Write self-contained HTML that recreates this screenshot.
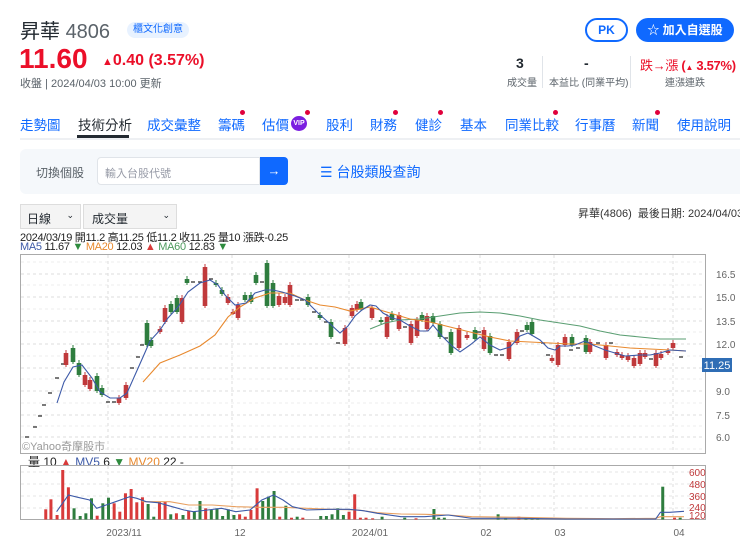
<!DOCTYPE html>
<html><head><meta charset="utf-8">
<style>
*{margin:0;padding:0;box-sizing:border-box}
body{width:740px;height:559px;overflow:hidden;background:#fff;font-family:"Liberation Sans","Noto Sans CJK TC",sans-serif;color:#232a31;position:relative}
.a{position:absolute;white-space:nowrap}
.nav span{position:absolute;top:114px;font-size:13.5px;color:#0f69ff}
.dot{position:absolute;width:5px;height:5px;border-radius:50%;background:#e0003c}
</style></head><body>
<div class="a" style="left:20px;top:15px;font-size:20px;color:#232a31">昇華 <span style="color:#5b636a">4806</span></div>
<div class="a" style="left:127px;top:22px;width:62px;height:16px;border-radius:8px;background:#e8f2ff;color:#0f69ff;font-size:10px;text-align:center;line-height:16px">櫃文化創意</div>
<div class="a" style="left:19px;top:43px;font-size:28px;font-weight:bold;color:#eb0f29">11.60</div>
<div class="a" style="left:102px;top:52px;font-size:16px;font-weight:bold;color:#eb0f29"><span style="font-size:11px">▲</span>0.40 (3.57%)</div>
<div class="a" style="left:20px;top:75px;font-size:11px;color:#5b636a">收盤 | 2024/04/03 10:00 更新</div>
<div class="a" style="left:585px;top:18px;width:43px;height:24px;border:2px solid #0f69ff;border-radius:12px;color:#0f69ff;font-size:12px;font-weight:bold;text-align:center;line-height:20px">PK</div>
<div class="a" style="left:636px;top:18px;width:98px;height:24px;background:#0f69ff;border-radius:12px;color:#fff;font-size:12px;font-weight:bold;text-align:center;line-height:24px">☆ 加入自選股</div>
<div class="a" style="left:516px;top:55px;font-size:14px;font-weight:bold">3</div>
<div class="a" style="left:507px;top:74px;font-size:10px;color:#5b636a">成交量</div>
<div class="a" style="left:542px;top:56px;width:1px;height:32px;background:#e0e4e9"></div>
<div class="a" style="left:584px;top:55px;font-size:14px;font-weight:bold">-</div>
<div class="a" style="left:549px;top:74px;font-size:10px;color:#5b636a">本益比 (同業平均)</div>
<div class="a" style="left:630px;top:56px;width:1px;height:32px;background:#e0e4e9"></div>
<div class="a" style="left:640px;top:55px;font-size:13px;color:#eb0f29;letter-spacing:-0.3px">跌→漲 <b>(<span style="font-size:8px">▲</span> 3.57%)</b></div>
<div class="a" style="left:665px;top:74px;font-size:10px;color:#5b636a">連漲連跌</div>
<div class="nav">
<span style="left:20px">走勢圖</span><span style="left:78px;color:#232a31">技術分析</span><span style="left:147px">成交彙整</span><span style="left:218px">籌碼</span><span style="left:262px">估價</span><span style="left:326px">股利</span><span style="left:370px">財務</span><span style="left:415px">健診</span><span style="left:460px">基本</span><span style="left:505px">同業比較</span><span style="left:575px">行事曆</span><span style="left:632px">新聞</span><span style="left:677px">使用說明</span>
</div>
<div class="a" style="left:291px;top:116px;width:16px;height:15px;border-radius:50%;background:#7b1fe0;color:#fff;font-size:7px;font-weight:bold;text-align:center;line-height:15px">VIP</div>
<div class="dot" style="left:240px;top:110px"></div><div class="dot" style="left:305px;top:110px"></div><div class="dot" style="left:393px;top:110px"></div><div class="dot" style="left:438px;top:110px"></div><div class="dot" style="left:553px;top:110px"></div><div class="dot" style="left:655px;top:110px"></div>
<div class="a" style="left:77px;top:135px;width:52px;height:3px;background:#232a31"></div>
<div class="a" style="left:20px;top:138px;width:720px;height:2px;background:#eef0f3"></div>
<div class="a" style="left:20px;top:149px;width:725px;height:45px;background:#f5f8fb;border-radius:6px"></div>
<div class="a" style="left:36px;top:164px;font-size:12px;color:#5b636a">切換個股</div>
<div class="a" style="left:97px;top:157px;width:163px;height:28px;background:#fff;border:1px solid #e0e4e9;border-radius:4px 0 0 4px;font-size:11px;color:#979ba7;padding:7px 7px">輸入台股代號</div>
<div class="a" style="left:260px;top:157px;width:28px;height:28px;background:#0f69ff;border-radius:0 4px 4px 0;color:#fff;font-size:13px;text-align:center;line-height:28px">→</div>
<div class="a" style="left:320px;top:162px;font-size:14px;color:#0f69ff">☰ 台股類股查詢</div>
<div class="a" style="left:20px;top:204px;width:61px;height:25px;background:#f4f4f4;border:1px solid #ddd;font-size:12px;padding:5px 6px">日線<span style="position:absolute;right:6px;font-size:9px">⌄</span></div>
<div class="a" style="left:83px;top:204px;width:94px;height:25px;background:#f4f4f4;border:1px solid #ddd;font-size:12px;padding:5px 8px">成交量<span style="position:absolute;right:6px;font-size:9px">⌄</span></div>
<div class="a" style="left:578px;top:205px;font-size:11px;color:#333">昇華(4806)&nbsp;&nbsp;最後日期: 2024/04/03</div>
<div class="a" style="left:20px;top:229px;font-size:11px;color:#222;letter-spacing:-0.3px">2024/03/19 開11.2 高11.25 低11.2 收11.25 量10 漲跌-0.25</div>
<div class="a" style="left:20px;top:241px;font-size:11px;color:#222;letter-spacing:-0.3px"><span style="color:#3d5aa8">MA5</span> 11.67 <span style="color:#2e8b3e">▼</span> <span style="color:#e8892e">MA20</span> 12.03 <span style="color:#d83a3a">▲</span> <span style="color:#4d9a5d">MA60</span> 12.83 <span style="color:#2e8b3e">▼</span></div>
<div class="a" style="left:28px;top:453px;font-size:12px;color:#222"><span>量</span> 10 <span style="color:#d83a3a">▲</span> <span style="color:#3d5aa8">MV5</span> 6 <span style="color:#2e8b3e">▼</span> <span style="color:#e8892e">MV20</span> 22 -</div>
<svg id="s" class="a" style="left:0;top:0" width="740" height="559"></svg>
<script>
var s='';
function L(x1,y1,x2,y2,c,d,w){s+='<line x1="'+x1+'" y1="'+y1+'" x2="'+x2+'" y2="'+y2+'" stroke="'+c+'" stroke-width="'+(w||1)+'"'+(d?' stroke-dasharray="3,3"':'')+'/>';}
function T(x,y,t,c,sz,a){s+='<text x="'+x+'" y="'+y+'" fill="'+c+'" font-size="'+sz+'" font-family="Liberation Sans,Noto Sans CJK TC,sans-serif"'+(a?' text-anchor="'+a+'"':'')+'>'+t+'</text>';}
var gx=[108,232,349,480,554,673];
[274,297,321,344,368,391,415,437].forEach(function(y){L(21,y,705,y,'#ddd',1);});
[262,285,309,332,356,379,403,426,449].forEach(function(y){L(21,y,705,y,'#eee',1);});
gx.forEach(function(x){L(x,255,x,452,'#ddd',1);L(x,466,x,519,'#ddd',1);});
s+='<rect x="20.5" y="254.5" width="685" height="199" fill="none" stroke="#aaa"/>';
s+='<rect x="20.5" y="465.5" width="685" height="54" fill="none" stroke="#aaa"/>';
[[274,'16.5'],[297,'15.0'],[321,'13.5'],[344,'12.0'],[391,'9.0'],[415,'7.5'],[437,'6.0']].forEach(function(p){T(716,p[0]+4,p[1],'#666',10);});
s+='<rect x="702" y="358" width="30" height="14" fill="#2f6db5"/>';T(717,369,'11.25','#fff',11,'middle');
T(22,450,'©Yahoo奇摩股市','#999',11);
var C=[[27,437,437,'k'],[35,427,427,'k'],[40,416,416,'k'],[44,405,405,'k'],[50,393,393,'k'],[57,378,378,'k'],[63,364,364,'k'],[66,353,365,'r'],[73,348,362,'g'],[79,363,375,'g'],[85,375,385,'r'],[90,380,389,'r'],[97,376,391,'g'],[102,388,395,'g'],[108,402,402,'k'],[114,402,402,'k'],[119,398,403,'r'],[126,385,398,'r'],[132,368,368,'k'],[138,357,357,'k'],[142,345,345,'k'],[147,323,345,'g'],[151,340,346,'g'],[160,329,332,'r'],[165,308,322,'r'],[171,304,312,'g'],[177,298,312,'g'],[182,298,322,'r'],[187,279,283,'g'],[193,282,282,'k'],[200,282,284,'k'],[205,267,306,'r'],[211,279,281,'k'],[216,283,285,'g'],[222,290,294,'g'],[228,297,303,'r'],[233,312,313,'r'],[238,305,318,'r'],[245,295,300,'g'],[251,295,302,'g'],[256,275,283,'g'],[262,282,283,'k'],[267,263,306,'g'],[273,283,306,'g'],[279,296,305,'r'],[285,297,303,'r'],[290,285,305,'r'],[297,300,301,'k'],[302,300,302,'k'],[308,297,305,'g'],[314,312,313,'k'],[320,315,318,'g'],[326,322,323,'k'],[331,322,337,'g'],[338,343,344,'k'],[345,328,344,'r'],[352,308,316,'r'],[357,304,310,'r'],[361,302,309,'g'],[372,308,318,'r'],[381,320,322,'g'],[387,317,337,'r'],[392,314,320,'g'],[399,315,329,'r'],[405,327,328,'k'],[411,324,343,'r'],[417,320,336,'r'],[422,315,320,'g'],[427,316,329,'r'],[433,316,323,'g'],[440,324,337,'g'],[446,338,339,'k'],[451,332,353,'g'],[459,328,348,'r'],[467,335,338,'r'],[475,330,339,'g'],[479,332,333,'k'],[484,330,349,'r'],[490,336,353,'g'],[496,355,356,'k'],[502,355,356,'k'],[509,342,359,'r'],[517,332,343,'r'],[522,331,333,'k'],[527,325,330,'g'],[532,322,334,'g'],[543,343,344,'k'],[548,355,356,'k'],[552,358,361,'r'],[558,345,365,'r'],[565,337,345,'r'],[571,350,351,'k'],[572,337,345,'g'],[578,348,351,'k'],[586,338,352,'g'],[590,342,352,'r'],[598,343,344,'k'],[606,345,358,'r'],[611,343,344,'k'],[617,352,355,'r'],[622,355,358,'r'],[628,356,360,'r'],[634,358,366,'r'],[640,353,364,'r'],[645,353,357,'r'],[651,359,360,'k'],[656,353,366,'r'],[661,354,358,'r'],[668,351,353,'r'],[673,343,348,'r'],[681,357,358,'k']];
C.forEach(function(c){var col=c[3]=='r'?'#c0393b':c[3]=='g'?'#2e7d3e':'#333';if(c[3]=='k'){L(c[0]-2,c[1],c[0]+2,c[1],'#333',0,1.3);}else{L(c[0],c[1]-3,c[0],c[2]+2,col,0,1);s+='<rect x="'+(c[0]-2.3)+'" y="'+c[1]+'" width="4.6" height="'+Math.max(2,c[2]-c[1])+'" fill="'+col+'"/>';}});
function P(pts,c,f){var d=pts.map(function(p){return f?(p[0]/2.12).toFixed(1)+','+(450+p[1]/3).toFixed(1):p[0]+','+p[1];}).join(' ');s+='<polyline points="'+d+'" fill="none" stroke="'+c+'" stroke-width="1.1"/>';}
P([[370,329],[385,323],[400,320],[420,319],[440,316],[460,313],[480,312],[500,313],[520,316],[540,320],[560,323],[580,326],[600,331],[620,335],[640,337],[660,339],[686,339]],'#5a9e72');
P([[143,382],[160,363],[180,355],[200,346],[215,335],[228,317],[240,307],[255,298],[270,293],[290,293],[305,300],[320,305],[335,307],[350,311],[370,307],[390,313],[410,319],[430,322],[450,327],[470,332],[490,337],[510,341],[530,342],[550,343],[570,344],[590,344],[610,346],[630,348],[650,349],[670,350],[686,351]],'#e8892e');
P([[57,403],[64,382],[73,367],[82,365],[92,378],[100,392],[110,398],[120,398],[127,393],[135,375],[143,357],[150,341],[160,330],[168,318],[178,307],[188,292],[200,283],[210,280],[218,285],[225,295],[235,305],[246,303],[255,293],[265,290],[273,290],[282,292],[295,296],[305,300],[318,313],[328,322],[340,333],[348,326],[355,316],[362,310],[370,305],[376,306],[383,313],[392,318],[400,320],[410,326],[420,331],[428,331],[433,325],[442,336],[452,346],[460,352],[470,345],[480,337],[490,345],[500,350],[510,347],[520,336],[528,333],[540,340],[548,348],[555,350],[560,346],[568,346],[575,345],[585,341],[595,346],[605,350],[615,353],[625,356],[640,355],[650,355],[660,353],[670,350],[686,351]],'#3d5aa8');
[472,484,496,508].forEach(function(y){L(21,y,705,y,'#e4e4e4',1);});
[['600',476],['480',488],['360',500],['240',511],['120',519]].forEach(function(p){T(689,p[1],p[0],'#c0393b',10);});
var V=[[97,178,'r'],[108,148,'r'],[121,195,'r'],[133,60,'r'],[145,112,'r'],[157,175,'g'],[170,198,'g'],[182,190,'g'],[194,145,'g'],[206,197,'r'],[218,160,'g'],[230,143,'g'],[242,160,'r'],[254,185,'r'],[266,130,'r'],[278,117,'r'],[290,157,'r'],[302,142,'r'],[314,162,'g'],[326,200,'g'],[338,155,'r'],[350,155,'r'],[362,193,'g'],[374,190,'r'],[388,195,'g'],[400,182,'r'],[412,185,'g'],[424,153,'g'],[436,175,'r'],[448,180,'g'],[460,175,'g'],[472,198,'g'],[484,178,'g'],[496,195,'g'],[508,193,'r'],[520,200,'r'],[532,180,'r'],[545,115,'r'],[557,153,'g'],[569,140,'g'],[581,123,'g'],[593,200,'r'],[606,167,'g'],[618,203,'r'],[630,200,'g'],[642,203,'r'],[680,198,'g'],[692,198,'g'],[704,193,'g'],[716,175,'g'],[728,195,'g'],[740,185,'r'],[752,133,'r'],[764,203,'r'],[776,203,'r'],[790,205,'r'],[810,200,'g'],[858,203,'g'],[882,205,'r'],[920,177,'g'],[930,203,'g'],[942,203,'g'],[1056,193,'g'],[1072,205,'g'],[1100,200,'r'],[1115,203,'g'],[1128,203,'g'],[1140,203,'g'],[1200,205,'g'],[1220,205,'g'],[1245,205,'g'],[1405,110,'g'],[1430,203,'r'],[1442,203,'g']];
V.forEach(function(v){var x=v[0]/2.12,y=450+v[1]/3;s+='<rect x="'+(x-1.5)+'" y="'+y.toFixed(1)+'" width="3" height="'+Math.max(1,519.5-y).toFixed(1)+'" fill="'+(v[2]=='r'?'#d83a3a':'#2e7d3e')+'"/>';});
P([[300,155],[360,155],[400,165],[450,165],[500,170],[550,172],[600,172],[650,175],[700,178],[760,180],[800,188],[850,192],[900,193],[950,195],[1000,200],[1100,202],[1200,205],[1300,206],[1390,205],[1400,200],[1450,200]],'#e8a060',1);
P([[120,185],[145,135],[165,142],[190,150],[205,175],[225,165],[245,155],[275,140],[290,145],[310,155],[335,158],[365,170],[390,180],[410,185],[440,180],[470,175],[500,185],[530,180],[555,150],[580,135],[600,150],[620,170],[650,180],[700,178],[740,178],[770,182],[800,190],[850,200],[900,200],[950,195],[1000,205],[1050,205],[1100,205],[1200,207],[1300,207],[1390,207],[1400,187],[1420,187],[1450,184]],'#3d5aa8',1);
[[124,'2023/11'],[240,'12'],[370,'2024/01'],[486,'02'],[560,'03'],[679,'04']].forEach(function(p){T(p[0],536,p[1],'#666',10,'middle');});
document.getElementById('s').innerHTML=s;
</script>
</body></html>
